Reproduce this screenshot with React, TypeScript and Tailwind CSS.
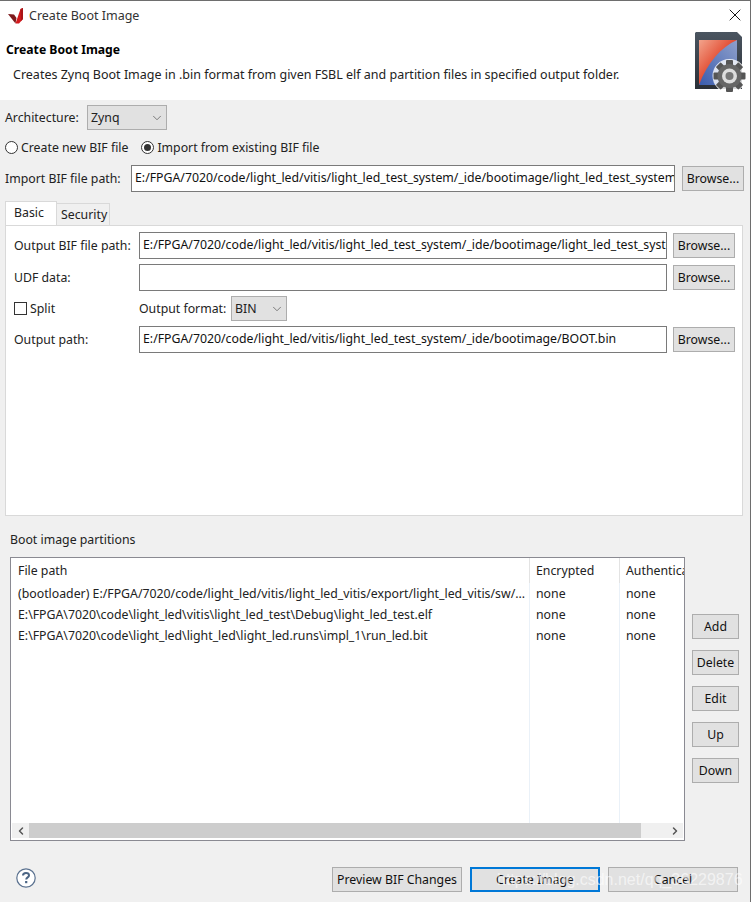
import React from 'react';
import { ChevronDown, ChevronLeft, ChevronRight, X } from 'lucide-react';

const BIF_PATH = 'E:/FPGA/7020/code/light_led/vitis/light_led_test_system/_ide/bootimage/light_led_test_system/light_led_test_system.bif';

const Button = ({ label, className = '' }: { label: string; className?: string }) => (
  <div className={`h-[25px] pt-[1px] flex items-center justify-center bg-[#e1e1e1] border border-[#adadad] text-[#111] shrink-0 ${className}`}>
    {label}
  </div>
);

const Input = ({ value, className = '' }: { value?: string; className?: string }) => (
  <div className={`h-[27px] bg-white border border-[#7a7a7a] pl-[3px] pb-[1px] flex items-center overflow-hidden whitespace-nowrap text-[#111] ${className}`}>
    {value}
  </div>
);

const Select = ({ value, className = '' }: { value: string; className?: string }) => (
  <div className={`h-[25px] bg-[#e1e1e1] border border-[#adadad] flex items-center justify-between pl-[3px] pr-[2px] ${className}`}>
    <span className="pt-[2px]">{value}</span>
    <ChevronDown className="w-[14px] h-[14px] text-[#555]" strokeWidth={1.25} />
  </div>
);

const VivadoLogo = () => (
  <svg width="16" height="16" viewBox="0 0 16 16" className="shrink-0">
    <path d="M0 6 L6 6.5 L8.5 10 L7.5 15.5 Z" fill="#7e1a1c" />
    <path d="M7.5 15.5 L12.5 1 L15 0 L15 11 L11 15.5 Z" fill="#d3191c" />
    <path d="M12.5 1 L15 0 L15 11 L13 13 Z" fill="#a91418" />
  </svg>
);

const CardIcon = () => (
  <svg width="54" height="62" viewBox="0 0 54 62">
    <defs>
      <linearGradient id="card" x1="0" y1="0" x2="0" y2="1">
        <stop offset="0" stopColor="#4b5560" />
        <stop offset="1" stopColor="#2a2f37" />
      </linearGradient>
      <linearGradient id="red" x1="0" y1="0" x2="1" y2="1">
        <stop offset="0" stopColor="#f2a48c" />
        <stop offset="0.5" stopColor="#e2492f" />
        <stop offset="1" stopColor="#e31b1b" />
      </linearGradient>
      <linearGradient id="blue" x1="1" y1="0" x2="0" y2="1">
        <stop offset="0" stopColor="#8fa0cb" />
        <stop offset="1" stopColor="#3a5cae" />
      </linearGradient>
    </defs>
    <path d="M2 1 H43 L48 6 V58 H1 V2 Z" fill="url(#card)" />
    <rect x="5" y="9" width="38" height="45" fill="url(#red)" />
    <path d="M43 9 V54 H5 C13 32 27 16 43 9 Z" fill="url(#blue)" />
    <g transform="translate(35.5 45)">
      <circle r="17" fill="#fff" opacity="0.8" />
      <g fill="#555">
        <rect x="-3.5" y="-16" width="7" height="32" rx="1" />
        <rect x="-3.5" y="-16" width="7" height="32" rx="1" transform="rotate(45)" />
        <rect x="-3.5" y="-16" width="7" height="32" rx="1" transform="rotate(90)" />
        <rect x="-3.5" y="-16" width="7" height="32" rx="1" transform="rotate(135)" />
      </g>
      <circle r="12" fill="#666" />
      <circle r="7.5" fill="#ddd" />
      <circle r="4" fill="#777" />
    </g>
  </svg>
);

const Radio = ({ label, checked }: { label: string; checked?: boolean }) => (
  <div className="flex items-center gap-[3px]">
    <div className="w-[13px] h-[13px] rounded-full bg-white border border-[#333] flex items-center justify-center">
      {checked && <div className="w-[7px] h-[7px] rounded-full bg-[#333]" />}
    </div>
    <span className="pt-[1px]">{label}</span>
  </div>
);

const ROWS = [
  '(bootloader) E:/FPGA/7020/code/light_led/vitis/light_led_vitis/export/light_led_vitis/sw/...',
  'E:\\FPGA\\7020\\code\\light_led\\vitis\\light_led_test\\Debug\\light_led_test.elf',
  'E:\\FPGA\\7020\\code\\light_led\\light_led\\light_led.runs\\impl_1\\run_led.bit',
];

const PartitionTable = () => (
  <div className="w-[675px] h-[284px] border border-[#8a8a92] bg-white flex flex-col">
    <div className="flex-1 flex min-h-0">
      <div className="w-[519px] border-r border-[#eaf1f8] flex flex-col">
        <div className="h-[25px] pt-[2px] pl-[7px] flex items-center border-r border-[#e3e3e3] -mr-px">File path</div>
        {ROWS.map((row) => (
          <div key={row} className="h-[21px] pt-[1px] pl-[7px] flex items-center whitespace-nowrap">{row}</div>
        ))}
      </div>
      <div className="w-[90px] border-r border-[#eaf1f8] flex flex-col">
        <div className="h-[25px] pt-[2px] pl-[6px] flex items-center border-r border-[#e3e3e3] -mr-px">Encrypted</div>
        {ROWS.map((row) => (
          <div key={row} className="h-[21px] pt-[1px] pl-[6px] flex items-center">none</div>
        ))}
      </div>
      <div className="flex-1 flex flex-col pl-[6px] overflow-hidden">
        <div className="h-[25px] pt-[2px] flex items-center whitespace-nowrap">Authentication</div>
        {ROWS.map((row) => (
          <div key={row} className="h-[21px] pt-[1px] flex items-center">none</div>
        ))}
      </div>
    </div>
    <div className="h-[15px] mb-[2px] mx-[1px] flex items-center bg-[#f0f0f0]">
      <div className="w-[17px] flex justify-center">
        <ChevronLeft className="w-[12px] h-[12px] text-[#555]" strokeWidth={3} />
      </div>
      <div className="w-[612px] h-full bg-[#cdcdcd]" />
      <div className="flex-1" />
      <div className="w-[17px] flex justify-center">
        <ChevronRight className="w-[12px] h-[12px] text-[#555]" strokeWidth={3} />
      </div>
    </div>
  </div>
);

export default function App() {
  return (
    <div className="w-[751px] h-[902px] relative overflow-hidden bg-[#f0f0f0] border-t border-r border-[#6e6e6e] font-['Noto_Sans',sans-serif] text-[12.3px] leading-none text-[#222]">
      {/* title bar + header */}
      <div className="h-[99px] bg-white flex justify-between">
        <div className="flex flex-col">
          <div className="h-[30px] flex items-center pl-[8px] gap-[5px] text-[#333] text-[12.5px]">
            <VivadoLogo />
            <span>Create Boot Image</span>
          </div>
          <div className="pl-[6px] pt-[13px] font-bold text-black text-[12.2px]">Create Boot Image</div>
          <div className="pl-[13px] pt-[13px] whitespace-nowrap text-[12.5px]">
            Creates Zynq Boot Image in .bin format from given FSBL elf and partition files in specified output folder.
          </div>
        </div>
        <div className="flex flex-col items-end pr-[2px]">
          <div className="h-[30px] flex items-center pb-[2px] pr-[3px]">
            <X className="w-[20px] h-[20px] text-black" strokeWidth={1.1} />
          </div>
          <CardIcon />
        </div>
      </div>

      {/* architecture */}
      <div className="pl-[5px] pt-[5px] flex items-center h-[30px]">
        <span className="w-[82px] pt-[2px]">Architecture:</span>
        <Select value="Zynq" className="w-[80px]" />
      </div>

      <div className="pl-[5px] pt-[6px] h-[29px] flex items-center gap-[13px]">
        <Radio label="Create new BIF file" />
        <Radio label="Import from existing BIF file" checked />
      </div>

      <div className="pl-[5px] pt-[6px] flex items-center">
        <span className="w-[126px] pt-[2px]">Import BIF file path:</span>
        <Input value={BIF_PATH} className="w-[544px]" />
        <Button label="Browse..." className="w-[62px] ml-[7px]" />
      </div>

      {/* tabs */}
      <div className="pl-[5px] pt-[9px] flex items-end">
        <div className="w-[52px] h-[24px] bg-white border border-b-0 border-[#d9d9d9] flex items-center pl-[8px]">Basic</div>
        <div className="w-[53px] h-[22px] bg-[#f0f0f0] border border-l-0 border-b-0 border-[#d9d9d9] flex items-center pl-[4px] pt-[2px]">Security</div>
      </div>
      <div className="ml-[5px] w-[738px] h-[291px] bg-white border border-[#d9d9d9] pl-[8px] pt-[6px] flex flex-col">
        <div className="flex items-center h-[27px]">
          <span className="w-[125px] pt-[1px]">Output BIF file path:</span>
          <Input value={BIF_PATH} className="w-[528px]" />
          <Button label="Browse..." className="w-[62px] ml-[6px]" />
        </div>
        <div className="flex items-center h-[27px] mt-[5px]">
          <span className="w-[125px] pt-[1px]">UDF data:</span>
          <Input className="w-[528px]" />
          <Button label="Browse..." className="w-[62px] ml-[6px]" />
        </div>
        <div className="flex items-center h-[25px] mt-[5px]">
          <div className="w-[125px] flex items-center gap-[3px]">
            <div className="w-[13px] h-[13px] bg-white border border-[#333]" />
            <span className="pt-[1px]">Split</span>
          </div>
          <span className="w-[92px] pt-[1px]">Output format:</span>
          <Select value="BIN" className="w-[56px]" />
        </div>
        <div className="flex items-center h-[27px] mt-[5px]">
          <span className="w-[125px] pt-[1px]">Output path:</span>
          <Input value="E:/FPGA/7020/code/light_led/vitis/light_led_test_system/_ide/bootimage/BOOT.bin" className="w-[528px]" />
          <Button label="Browse..." className="w-[62px] ml-[6px]" />
        </div>
      </div>

      {/* partitions */}
      <div className="pl-[10px] pt-[18px] h-[41px]">Boot image partitions</div>
      <div className="pl-[10px] flex">
        <PartitionTable />
        <div className="pl-[7px] pt-[57px] flex flex-col gap-[11px]">
          {['Add', 'Delete', 'Edit', 'Up', 'Down'].map((label) => (
            <Button key={label} label={label} className="w-[47px]" />
          ))}
        </div>
      </div>

      {/* footer */}
      <div className="pt-[26px] pl-[16px] flex items-center">
        <svg width="20" height="20" viewBox="0 0 20 20" className="shrink-0 mb-[3px]">
          <circle cx="10" cy="10" r="9.2" fill="#fff" stroke="#5b7290" strokeWidth="1.2" />
          <path d="M7 7.6 C7 5.8 8.4 5 10 5 C11.8 5 13 6 13 7.4 C13 9.4 10.2 9.4 10.2 11.6" fill="none" stroke="#4a6484" strokeWidth="2" />
          <rect x="9.1" y="13" width="2.2" height="2.2" fill="#4a6484" />
        </svg>
        <Button label="Preview BIF Changes" className="w-[130px] ml-[296px]" />
        <Button label="Create Image" className="w-[130px] ml-[8px] !border-2 !border-[#0078d7]" />
        <Button label="Cancel" className="w-[130px] ml-[8px]" />
      </div>

      {/* csdn watermark over the buttons */}
      <div className="absolute left-[497px] top-[871px] text-[16px] font-['Liberation_Sans',sans-serif] text-white/60 whitespace-nowrap">
        https://blog.csdn.net/qq_36229876
      </div>
    </div>
  );
}
